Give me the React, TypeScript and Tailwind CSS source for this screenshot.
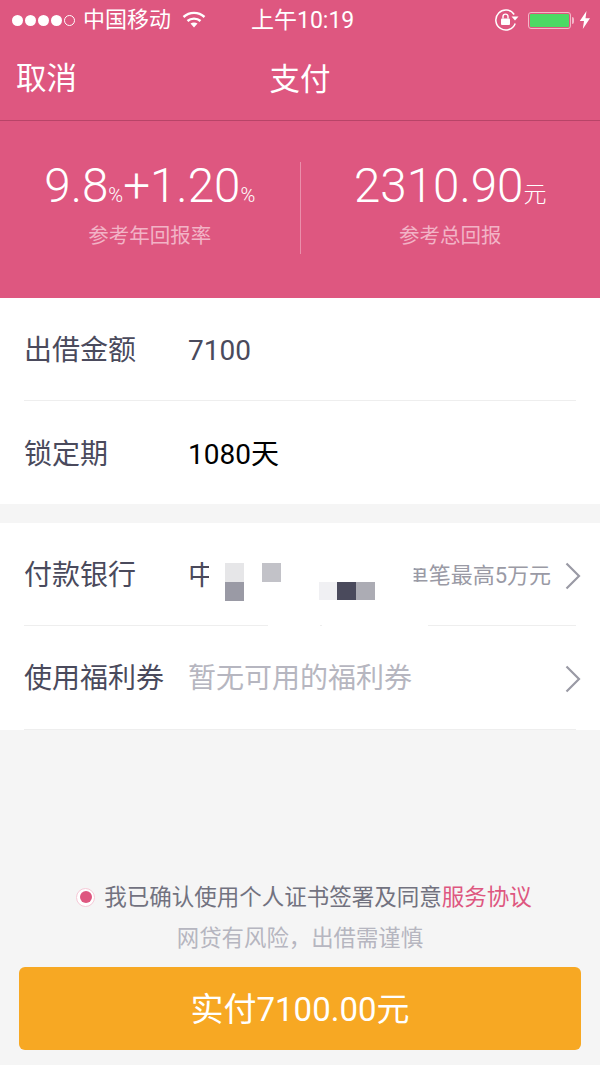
const FONT = "font-['Roboto','Noto_Sans_CJK_SC',sans-serif]";

function Chevron() {
  return (
    <svg width="16" height="28" viewBox="0 0 16 28" fill="none" className="shrink-0">
      <path d="M1.5 1.5 L14 14 L1.5 26.5" stroke="#9a9aa5" strokeWidth="2.2" />
    </svg>
  );
}

function Wifi() {
  return (
    <svg width="24" height="18" viewBox="0 0 24 18" fill="none">
      <path d="M1.5 6 C7.5 0.5 16.5 0.5 22.5 6" stroke="#fff" strokeWidth="2.4" />
      <path d="M5.5 10 C9 6.8 15 6.8 18.5 10" stroke="#fff" strokeWidth="2.4" />
      <path d="M8.5 12.6 L12 16.5 L15.5 12.6 C13.5 11 10.5 11 8.5 12.6Z" fill="#fff" />
    </svg>
  );
}

function RotationLock() {
  return (
    <svg width="24" height="22" viewBox="0 0 24 22" fill="none">
      <path d="M20.2 14.5 A10 10 0 1 1 19.2 5.5" stroke="#fff" strokeWidth="1.5" />
      <path d="M16.5 7.5 H23.5 L20 11.5Z" fill="#fff" />
      <rect x="6" y="9.5" width="9" height="6.5" rx="1" fill="#fff" />
      <path d="M8 9.5 V7.6 A2.5 2.5 0 0 1 13 7.6 V9.5" stroke="#fff" strokeWidth="1.4" />
    </svg>
  );
}

function Bolt() {
  return (
    <svg width="12" height="18" viewBox="0 0 12 18">
      <path d="M7.5 0 L0.8 10 H5 L3.8 18 L11 7.2 H6.5 Z" fill="#fff" />
    </svg>
  );
}

function StatusBar() {
  return (
    <div className="flex h-[40px] items-center pl-[12px] pr-[9px] text-white">
      <div className="flex w-[239px] items-center">
        <div className="flex items-center gap-[2px]">
          {[0, 1, 2, 3].map((i) => (
            <span key={i} className="h-[11px] w-[11px] rounded-full bg-white" />
          ))}
          <span className="h-[11px] w-[11px] rounded-full border border-white" />
        </div>
        <span className="ml-[8px] text-[22px] leading-none">中国移动</span>
        <span className="ml-[11px] flex"><Wifi /></span>
      </div>
      <span className="text-[23px] leading-none">上午10:19</span>
      <div className="ml-auto flex items-center">
        <RotationLock />
        <div className="ml-[9px] flex h-[17px] w-[43px] items-center rounded-[3px] border border-[#f3b7c9] p-[1px]">
          <div className="h-full w-full rounded-[1px] bg-[#4cd964]" />
        </div>
        <span className="ml-[1px] h-[7px] w-[2px] rounded-r-sm bg-[#f3b7c9]" />
        <span className="ml-[5px] flex"><Bolt /></span>
      </div>
    </div>
  );
}

function Stat({ children, label }: { children: React.ReactNode; label: string }) {
  return (
    <div className="flex flex-1 flex-col items-center pb-[7px]">
      <div className="flex h-[50px] items-baseline text-[47.5px] leading-none font-light text-white">{children}</div>
      <div className="mt-[13px] text-[20.5px] leading-none text-[#f2b3c6]">{label}</div>
    </div>
  );
}

function Row({ label, children, border = true }: { label: string; children: React.ReactNode; border?: boolean }) {
  return (
    <div className={`mx-[24px] flex h-[103px] items-center pt-[4px] ${border ? "border-b border-[#eeeeee]" : ""}`}>
      <span className="w-[164px] shrink-0 text-[28px] leading-none text-[#4a4a5c]">{label}</span>
      {children}
    </div>
  );
}

export default function App() {
  return (
    <div className={`flex h-[1065px] w-[600px] flex-col overflow-hidden bg-[#f5f5f5] ${FONT}`}>
      <header className="h-[298px] bg-[#de5780]">
        <StatusBar />
        <div className="relative flex h-[81px] items-center justify-center border-b border-[#b84468]">
          <span className="absolute left-[16px] top-[24px] text-[30.5px] leading-none text-white">取消</span>
          <span className="text-[30.5px] leading-none text-white">支付</span>
        </div>
        <div className="flex items-center pt-[41px]">
          <Stat label="参考年回报率">
            9.8<span className="text-[20px]">%</span>+1.20<span className="text-[20px]">%</span>
          </Stat>
          <div className="h-[92px] w-px bg-[#ea8fab]" />
          <Stat label="参考总回报">
            2310.90<span className="text-[23px]">元</span>
          </Stat>
        </div>
      </header>

      <section className="bg-white">
        <Row label="出借金额">
          <span className="text-[28px] leading-none text-[#4a4a5c]">7100</span>
        </Row>
        <Row label="锁定期" border={false}>
          <span className="text-[28px] leading-none text-black">1080天</span>
        </Row>
      </section>

      <section className="mt-[19px] bg-white">
        <div className="relative mx-[24px] flex h-[102px] items-center pt-[4px]">
          <span className="w-[164px] shrink-0 text-[28px] leading-none text-[#4a4a5c]">付款银行</span>
          <span className="text-[28px] leading-none text-[#4a4a5c] [clip-path:inset(0_7px_0_0)]">中</span>
          <span className="absolute left-[201px] top-[40px] h-[19px] w-[19px] bg-[#e6e6e8]" />
          <span className="absolute left-[201px] top-[59px] h-[19px] w-[19px] bg-[#9a9aa5]" />
          <span className="absolute left-[238px] top-[40px] h-[19px] w-[19px] bg-[#c2c2c8]" />
          <span className="absolute left-[295px] top-[59px] h-[18px] w-[18px] bg-[#f0f0f3]" />
          <span className="absolute left-[313px] top-[59px] h-[18px] w-[19px] bg-[#4a4a5c]" />
          <span className="absolute left-[332px] top-[59px] h-[18px] w-[19px] bg-[#acacb4]" />
          <div className="ml-auto flex items-center">
            <span className="text-[22px] leading-none text-[#9a9aa5] [clip-path:inset(3px_0_5px_7px)]">单</span>
            <span className="text-[22px] leading-none text-[#9a9aa5]">笔最高5万元</span>
            <span className="ml-[14px] mr-[-5px] flex"><Chevron /></span>
          </div>
        </div>
        <div className="mx-[24px] flex h-px">
          <span className="w-[244px] bg-[#eeeeee]" />
          <span className="ml-[52px] w-[2px] bg-[#eeeeee]" />
          <span className="ml-[106px] flex-1 bg-[#eeeeee]" />
        </div>
        <div className="mx-[24px] flex h-[104px] items-center border-b border-[#eeeeee] pt-[3px]">
          <span className="w-[164px] shrink-0 text-[28px] leading-none text-[#4a4a5c]">使用福利券</span>
          <span className="text-[28px] leading-none text-[#b6b6c0]">暂无可用的福利券</span>
          <span className="ml-auto mr-[-5px] flex"><Chevron /></span>
        </div>
      </section>

      <div className="mt-auto flex flex-col items-center px-[19px] pb-[15px]">
        <div className="ml-[8px] flex items-center">
          <span className="mr-[9px] flex h-[19px] w-[19px] items-center justify-center rounded-full border border-[#f6c9d7] bg-white">
            <span className="h-[12px] w-[12px] rounded-full bg-[#de5780]" />
          </span>
          <span className="text-[22.5px] leading-none text-[#72727f]">
            我已确认使用个人证书签署及同意<span className="text-[#de5780]">服务协议</span>
          </span>
        </div>
        <div className="mt-[18px] text-[22.4px] leading-none text-[#b6b6c0]">网贷有风险，出借需谨慎</div>
        <button className="mt-[18px] flex h-[83px] w-full items-center justify-center rounded-[6px] bg-[#f7a823] pt-[2px] text-[33px] leading-none text-white">
          实付7100.00元
        </button>
      </div>
    </div>
  );
}
